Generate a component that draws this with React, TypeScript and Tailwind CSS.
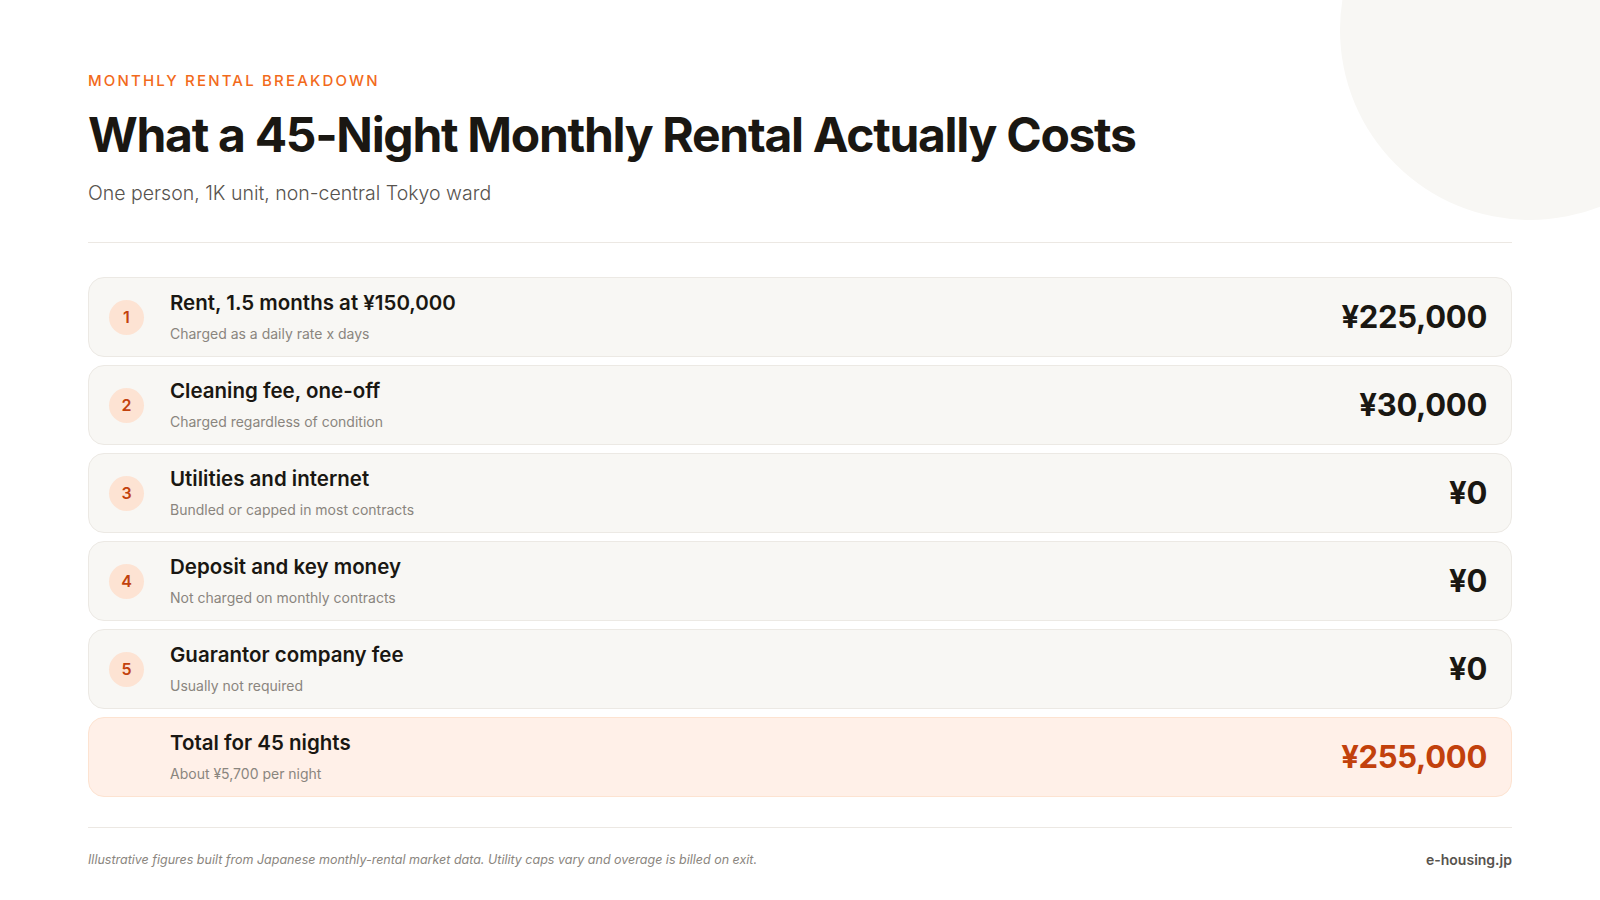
import React from "react";

const rows = [
  { n: 1, title: "Rent, 1.5 months at ¥150,000", sub: "Charged as a daily rate x days", amount: "¥225,000" },
  { n: 2, title: "Cleaning fee, one-off", sub: "Charged regardless of condition", amount: "¥30,000" },
  { n: 3, title: "Utilities and internet", sub: "Bundled or capped in most contracts", amount: "¥0" },
  { n: 4, title: "Deposit and key money", sub: "Not charged on monthly contracts", amount: "¥0" },
  { n: 5, title: "Guarantor company fee", sub: "Usually not required", amount: "¥0" },
];

export default function App() {
  return (
    <div
      className="relative w-[1600px] h-[900px] overflow-hidden bg-white"
      style={{ fontFamily: "Inter, 'Noto Sans', sans-serif" }}
    >
      <div className="absolute left-[1340px] top-[-160px] w-[380px] h-[380px] rounded-full bg-[#f8f7f4]" />
      <div className="relative flex flex-col px-[88px] pt-[71px]">
        <div className="text-[15px] leading-5 font-medium tracking-[0.145em] text-[#f26a1b]">
          MONTHLY RENTAL BREAKDOWN
        </div>
        <h1 className="mt-[14px] text-[48px] leading-[60px] font-bold tracking-[-0.027em] text-[#1a1712]">
          What a 45-Night Monthly Rental Actually Costs
        </h1>
        <div className="mt-[14px] text-[19.5px] leading-7 font-light text-[#57534e]">
          One person, 1K unit, non-central Tokyo ward
        </div>
        <div className="mt-[35px] h-px bg-[#ece8e3]" />
        <div className="mt-[34px] flex flex-col gap-2">
          {rows.map((r) => (
            <div
              key={r.n}
              className="h-20 flex items-center rounded-2xl border border-[#ece9e4] bg-[#f8f7f4] pl-[20px] pr-[24px]"
            >
              <div className="w-[35px] h-[35px] rounded-full bg-[#fde3d3] flex items-center justify-center text-[16px] font-semibold text-[#c2410c]">
                {r.n}
              </div>
              <div className="ml-[26px] flex flex-col gap-2 flex-1">
                <div className="text-[20.5px] leading-[26px] font-semibold text-[#1a1712]">{r.title}</div>
                <div className="text-[14px] leading-5 text-[#8a857e]">{r.sub}</div>
              </div>
              <div className="text-[31px] font-bold tracking-[-0.01em] text-[#1a1712]">{r.amount}</div>
            </div>
          ))}
          <div className="h-20 flex items-center rounded-2xl border border-[#fde3d1] bg-[#fff0e8] pl-[20px] pr-[24px]">
            <div className="w-[35px] h-[35px]" />
            <div className="ml-[26px] flex flex-col gap-2 flex-1">
              <div className="text-[20.5px] leading-[26px] font-semibold text-[#1a1712]">Total for 45 nights</div>
              <div className="text-[14px] leading-5 text-[#8a857e]">About ¥5,700 per night</div>
            </div>
            <div className="text-[31px] font-bold tracking-[-0.01em] text-[#c2410c]">¥255,000</div>
          </div>
        </div>
        <div className="mt-[30px] h-px bg-[#ece8e3]" />
        <div className="mt-[22px] flex items-center justify-between">
          <div className="text-[12.5px] leading-5 italic text-[#8a857e]">
            Illustrative figures built from Japanese monthly-rental market data. Utility caps vary and overage is billed on exit.
          </div>
          <div className="text-[14px] leading-5 font-semibold text-[#57534e]">e-housing.jp</div>
        </div>
      </div>
    </div>
  );
}
